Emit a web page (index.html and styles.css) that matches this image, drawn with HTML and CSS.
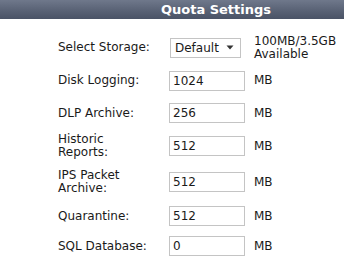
FILE: index.html
```html
<!DOCTYPE html>
<html>
<head>
<meta charset="utf-8">
<link rel="stylesheet" href="styles.css">
</head>
<body>
<div class="panel">
  <div class="header">Quota Settings</div>
  <div class="form">
    <div class="label">Select Storage:</div>
    <div class="field">
      <div class="select"><span>Default</span><svg width="8" height="5" viewBox="0 0 8 5"><path d="M0.5 0.5 L7.5 0.5 L4 4.5 Z" fill="#333"/></svg></div>
    </div>
    <div class="note">100MB/3.5GB<br>Available</div>

    <div class="label">Disk Logging:</div>
    <div class="field"><input class="box" type="text" value="1024"></div>
    <div class="note">MB</div>

    <div class="label">DLP Archive:</div>
    <div class="field"><input class="box" type="text" value="256"></div>
    <div class="note">MB</div>

    <div class="label">Historic Reports:</div>
    <div class="field"><input class="box" type="text" value="512"></div>
    <div class="note">MB</div>

    <div class="label">IPS Packet Archive:</div>
    <div class="field"><input class="box" type="text" value="512"></div>
    <div class="note">MB</div>

    <div class="label">Quarantine:</div>
    <div class="field"><input class="box" type="text" value="512"></div>
    <div class="note">MB</div>

    <div class="label">SQL Database:</div>
    <div class="field"><input class="box" type="text" value="0"></div>
    <div class="note">MB</div>
  </div>
</div>
</body>
</html>
```
FILE: styles.css
```css
html, body {
  margin: 0;
  padding: 0;
  background: #ffffff;
}
body {
  font-family: "DejaVu Sans", Verdana, sans-serif;
  font-size: 12px;
  color: #1a1a1a;
}
.panel {
  width: 344px;
}
.header {
  height: 19px;
  line-height: 19px;
  padding-left: 88px;
  text-align: center;
  font-weight: bold;
  font-size: 13px;
  color: #ffffff;
  background: linear-gradient(to bottom, #6f788b 0%, #5b6477 50%, #4a5366 100%);
}
.form {
  display: grid;
  grid-template-columns: 111px 85px auto;
  grid-template-rows: 33px 33px 32px 34px 38px 30px 30px;
  padding: 12px 0 0 58px;
  align-items: center;
}
.label {
  padding-right: 13px;
  line-height: 13px;
}
.field {
  display: flex;
}
.note {
  line-height: 13px;
}
.box {
  box-sizing: border-box;
  width: 76px;
  height: 20px;
  margin: 0;
  padding: 0 3px;
  border: 1px solid #c4c4c4;
  background: #ffffff;
  font-family: "DejaVu Sans", Verdana, sans-serif;
  font-size: 12px;
  color: #1a1a1a;
  outline: none;
}
.select {
  box-sizing: border-box;
  width: 71px;
  height: 20px;
  margin-left: 1px;
  padding: 0 4px;
  border: 1px solid #c4c4c4;
  background: #ffffff;
  display: flex;
  align-items: center;
  justify-content: space-between;
}
.select svg {
  display: block;
  margin-right: 2px;
}
```
